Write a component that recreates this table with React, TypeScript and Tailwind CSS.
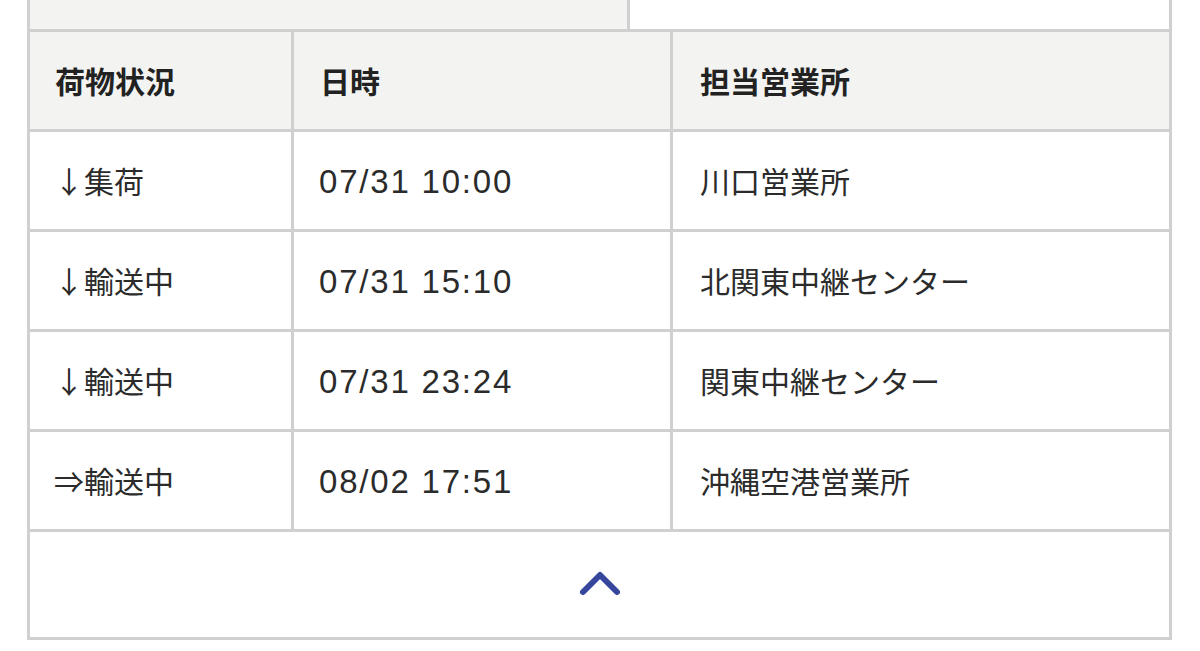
import React from "react";

const rows = [
  { s: "↓集荷", d: "07/31 10:00", o: "川口営業所" },
  { s: "↓輸送中", d: "07/31 15:10", o: "北関東中継センター" },
  { s: "↓輸送中", d: "07/31 23:24", o: "関東中継センター" },
  { s: "⇒輸送中", d: "08/02 17:51", o: "沖縄空港営業所" },
];

export default function App() {
  return (
    <div
      className="w-[1200px] h-[651px] bg-white overflow-hidden"
      style={{ fontFamily: '"Noto Sans CJK JP", "Noto Sans", sans-serif' }}
    >
      <div className="ml-[27px] w-[1145px]">
        <div className="flex h-[29px]">
          <div className="w-[603px] bg-[#f3f3f1] border-l-[3px] border-r-[3px] border-[#d0d0d0]" />
          <div className="flex-1 border-r-[3px] border-[#d0d0d0]" />
        </div>
        <div className="border-[3px] border-[#d0d0d0]">
          <div className="grid grid-cols-[261px_3px_376px_3px_1fr] h-[97px] bg-[#f3f3f1] text-[30px] font-bold text-[#222]">
            <div className="flex items-center pl-[25px]">荷物状況</div>
            <div className="bg-[#d0d0d0]" />
            <div className="flex items-center pl-[26px]">日時</div>
            <div className="bg-[#d0d0d0]" />
            <div className="flex items-center pl-[27px]">担当営業所</div>
          </div>
          {rows.map((r, i) => (
            <div
              key={i}
              className="grid grid-cols-[261px_3px_376px_3px_1fr] h-[100px] border-t-[3px] border-[#d0d0d0] text-[30px] text-[#2b2b2b]"
            >
              <div className="flex items-center pl-[24px]">{r.s}</div>
              <div className="bg-[#d0d0d0]" />
              <div
                className="flex items-center pl-[25px] pt-[2px] text-[33px] tracking-[1.8px]"
                style={{ fontFamily: '"Liberation Sans", Arial, sans-serif' }}
              >
                {r.d}
              </div>
              <div className="bg-[#d0d0d0]" />
              <div className="flex items-center pl-[27px]">{r.o}</div>
            </div>
          ))}
          <div className="h-[108px] border-t-[3px] border-[#d0d0d0] flex items-center justify-center">
            <svg width="44" height="30" viewBox="0 0 44 30" className="mt-[-4px]">
              <polyline
                points="5,24 22,7 39,24"
                fill="none"
                stroke="#36469c"
                strokeWidth="6"
                strokeLinecap="round"
                strokeLinejoin="round"
              />
            </svg>
          </div>
        </div>
      </div>
    </div>
  );
}
